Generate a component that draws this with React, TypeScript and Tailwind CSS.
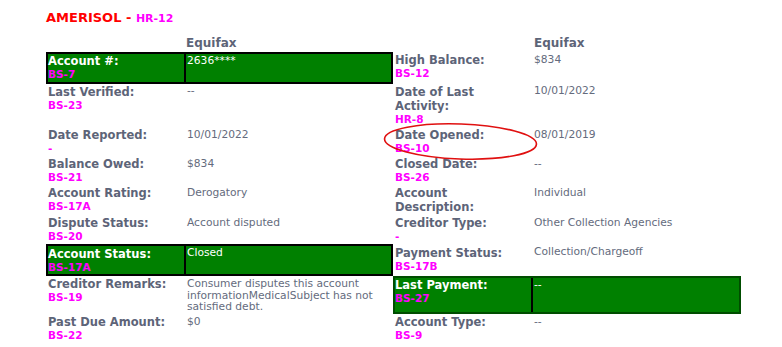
import React from "react";

type Half = {
  label: string;
  tag?: string;
  value: string;
  green?: boolean;
};

const rows: [Half, Half][] = [
  [
    { label: "Account #:", tag: "BS-7", value: "2636****", green: true },
    { label: "High Balance:", tag: "BS-12", value: "$834" },
  ],
  [
    { label: "Last Verified:", tag: "BS-23", value: "--" },
    { label: "Date of Last Activity:", tag: "HR-8", value: "10/01/2022" },
  ],
  [
    { label: "Date Reported:", tag: "-", value: "10/01/2022" },
    { label: "Date Opened:", tag: "BS-10", value: "08/01/2019" },
  ],
  [
    { label: "Balance Owed:", tag: "BS-21", value: "$834" },
    { label: "Closed Date:", tag: "BS-26", value: "--" },
  ],
  [
    { label: "Account Rating:", tag: "BS-17A", value: "Derogatory" },
    { label: "Account Description:", value: "Individual" },
  ],
  [
    { label: "Dispute Status:", tag: "BS-20", value: "Account disputed" },
    { label: "Creditor Type:", tag: "-", value: "Other Collection Agencies" },
  ],
  [
    { label: "Account Status:", tag: "BS-17A", value: "Closed", green: true },
    { label: "Payment Status:", tag: "BS-17B", value: "Collection/Chargeoff" },
  ],
  [
    {
      label: "Creditor Remarks:",
      tag: "BS-19",
      value:
        "Consumer disputes this account informationMedicalSubject has not satisfied debt.",
    },
    { label: "Last Payment:", tag: "BS-27", value: "--", green: true },
  ],
  [
    { label: "Past Due Amount:", tag: "BS-22", value: "$0" },
    { label: "Account Type:", tag: "BS-9", value: "--" },
  ],
];

const Cell = ({ half, right }: { half: Half; right?: boolean }) => {
  // GREEN ROWS GET A DARK FRAME AND A DIVIDER BETWEEN LABEL AND VALUE
  const frame = half.green
    ? `bg-[#008000] border-2 ${right ? "border-[#004d00]" : "border-black"}`
    : "border-x-2 border-transparent";
  const pad = half.green ? "py-[0.25px]" : "py-[1.1px]";

  return (
    <div className={`grid grid-cols-[136px_1fr] ${frame}`}>
      <div className={`pr-[8px] ${pad}`}>
        <p
          className={`text-[11.5px] leading-[14px] font-bold ${
            half.green ? "text-white" : "text-[#5d6478]"
          }`}
        >
          {half.label}
        </p>
        {half.tag && (
          <p className="text-[10.5px] leading-[13px] font-bold text-[#ff00ff]">
            {half.tag}
          </p>
        )}
      </div>
      <div
        className={`pl-px border-l-2 ${pad} ${
          half.green ? "border-black text-white" : "border-transparent text-[#646b7d]"
        }`}
      >
        <p className="pt-[0.75px] text-[10.7px] leading-[11.8px]">{half.value}</p>
      </div>
    </div>
  );
};

const App = () => {
  return (
    <div
      className="w-[782px] h-[347px] bg-white overflow-hidden pl-[46px] pt-[9px]"
      style={{ fontFamily: '"DejaVu Sans", Verdana, sans-serif' }}
    >
      {/* TITLE */}
      <p className="h-[15px] leading-[15px] font-bold">
        <span className="text-[13px] text-[#ff0000]">AMERISOL - </span>
        <span className="text-[11px] text-[#ff00ff]">HR-12</span>
      </p>

      <div className="relative w-[695px] mt-[12px]">
        {/* BUREAU HEADERS */}
        <div className="grid grid-cols-[347px_348px] h-[16px] pt-px">
          <p className="pl-[140px] text-[12px] leading-[13px] font-bold text-[#5d6478]">
            Equifax
          </p>
          <p className="pl-[141px] text-[12px] leading-[13px] font-bold text-[#5d6478]">
            Equifax
          </p>
        </div>

        {/* DATA ROWS */}
        <div className="grid grid-cols-[347px_348px]">
          {rows.map(([l, r], i) => (
            <React.Fragment key={i}>
              <Cell half={l} />
              <Cell half={r} right />
            </React.Fragment>
          ))}
        </div>

        {/* RED CIRCLE ANNOTATION */}
        <svg
          className="absolute left-[334px] top-[83px] pointer-events-none"
          width="160"
          height="45"
          viewBox="0 0 160 45"
        >
          <ellipse
            cx="80.5"
            cy="22.5"
            rx="76"
            ry="17.5"
            transform="rotate(2 80.5 22.5)"
            fill="none"
            stroke="#e01010"
            strokeWidth="1.6"
          />
        </svg>
      </div>
    </div>
  );
};

export default App;
